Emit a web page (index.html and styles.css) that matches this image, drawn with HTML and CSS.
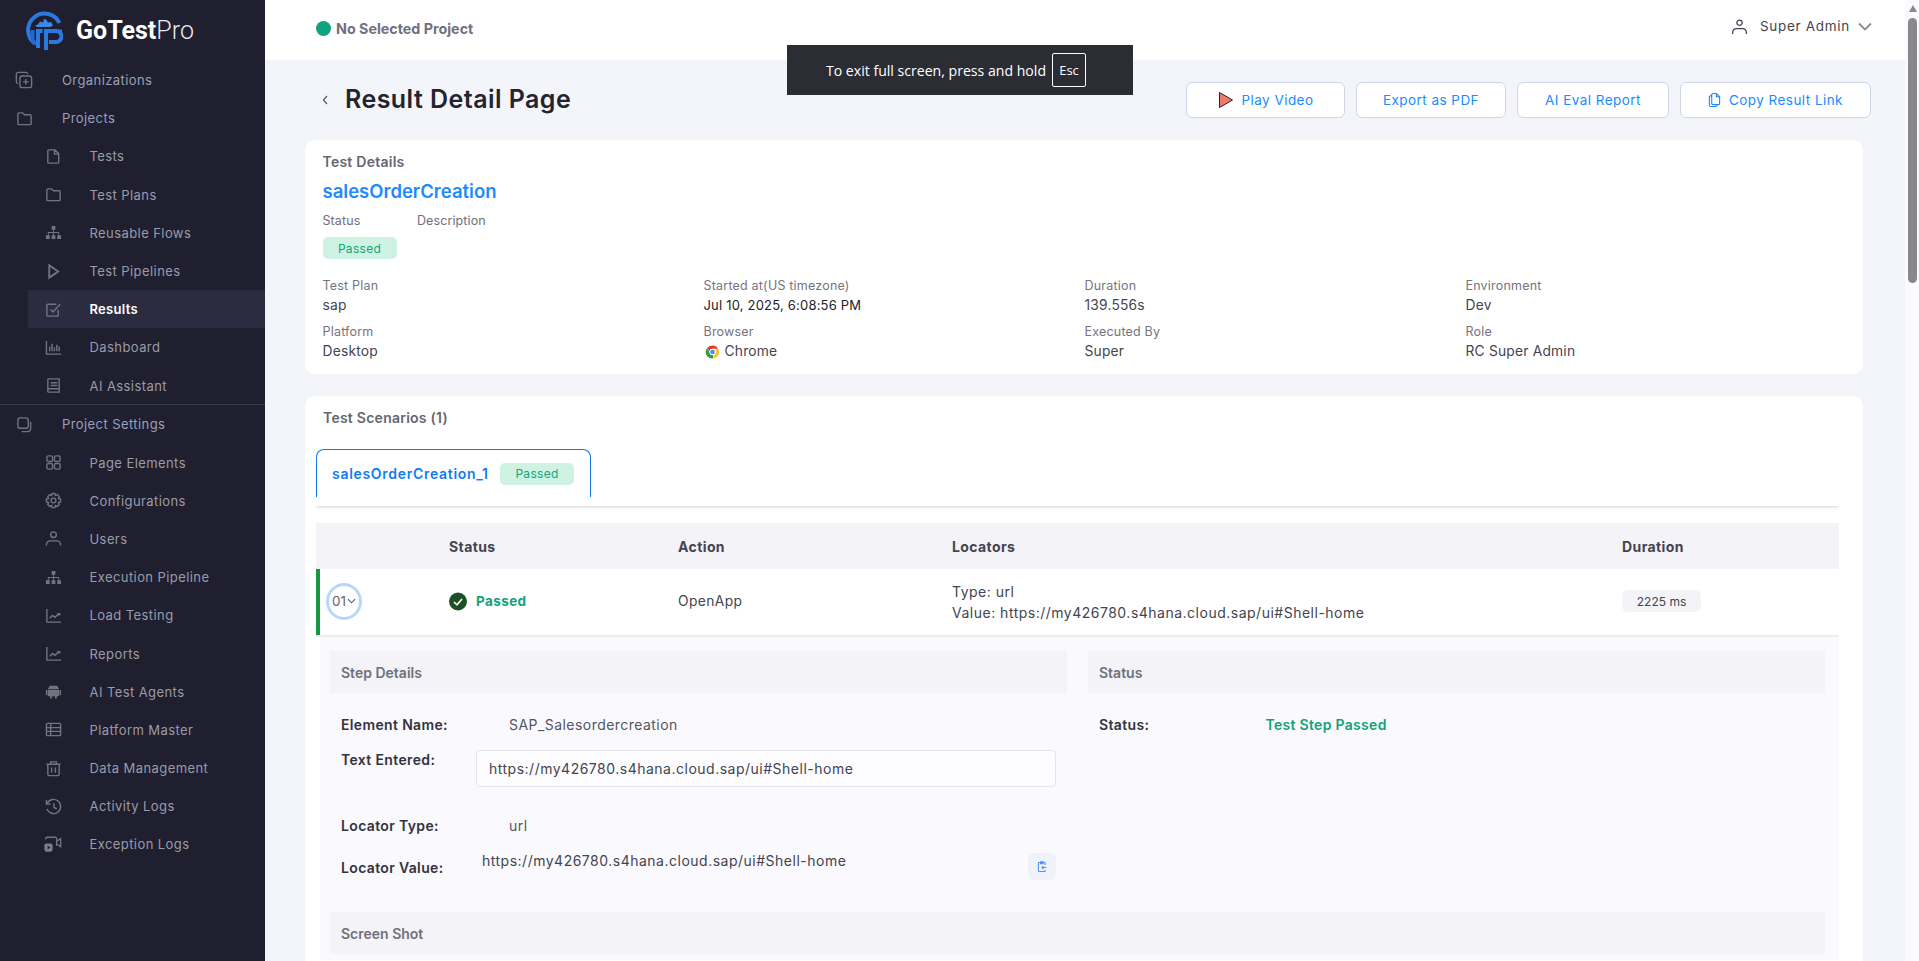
FILE: index.html
```html
<!DOCTYPE html>
<html lang="en">
<head>
<meta charset="utf-8">
<title>Result Detail Page</title>
<link rel="stylesheet" href="styles.css">
</head>
<body>
<aside class="sidebar">
  <div class="brand">
    <svg class="brand-mark" viewBox="0 0 38 40" fill="none">
      <path d="M10 32.500A16.500 16.500 0 1 1 34.500 12" stroke="#2a78e0" stroke-width="4"/>
      <path d="M10 14.500l3-1 2-3 3 1 1-3.500 2 .5 2 3 3-.5 2 3.500-3 1.500H12z" fill="#3b8ae8"/>
      <path d="M7.500 19v8a6 6 0 0 0 5 5.800" stroke="#2468cf" stroke-width="4"/>
      <path d="M17.500 20h-4.500v17M21 39V20h10a5 5 0 0 1 0 11h-7" stroke="#2a78e0" stroke-width="4"/>
      <path d="M33 20h4" stroke="#2a78e0" stroke-width="3"/>
    </svg>
    <span class="brand-name"><b>GoTest</b>Pro</span>
  </div>
  <nav>
    <a class="nav-top"><svg class="ico big" viewBox="0 0 20 20"><rect x="5.500" y="5.500" width="13" height="13" rx="2.500"/><path d="M3.500 14A2 2 0 0 1 1.500 12V3.500A2 2 0 0 1 3.500 1.500H12A2 2 0 0 1 14 3.500M12 9v6M9 12h6"/></svg><span>Organizations</span></a>
    <a class="nav-top"><svg class="ico" viewBox="0 0 18 18"><path d="M2 14.500V4a1 1 0 0 1 1-1h4l2 2h6a1 1 0 0 1 1 1v8.500a1 1 0 0 1-1 1H3a1 1 0 0 1-1-1z"/></svg><span>Projects</span></a>
    <a class="nav-sub"><svg class="ico" viewBox="0 0 18 18"><path d="M4 2h6.500L14.500 6v9a1 1 0 0 1-1 1H4a1 1 0 0 1-1-1V3a1 1 0 0 1 1-1zM10 2v4.500h4.500"/></svg><span>Tests</span></a>
    <a class="nav-sub"><svg class="ico" viewBox="0 0 18 18"><path d="M2 14.500V4a1 1 0 0 1 1-1h4l2 2h6a1 1 0 0 1 1 1v8.500a1 1 0 0 1-1 1H3a1 1 0 0 1-1-1z"/></svg><span>Test Plans</span></a>
    <a class="nav-sub"><svg class="ico solid" viewBox="0 0 18 18"><path d="M7 2h4v4H7zM1 12h4v4H1zM7 12h4v4H7zM13 12h4v4h-4zM8.500 6h1v2.500h5.500v3.500h-1v-2.500H9.500v2.500h-1v-2.500H4v2.500H3V8.500h5.500z"/></svg><span>Reusable Flows</span></a>
    <a class="nav-sub"><svg class="ico thick" viewBox="0 0 18 18"><path d="M4.500 2.500L14 9l-9.500 6.500z"/></svg><span>Test Pipelines</span></a>
    <a class="nav-sub active"><svg class="ico" viewBox="0 0 18 18"><path d="M14 9.500V15a1 1 0 0 1-1 1H3a1 1 0 0 1-1-1V4.500a1 1 0 0 1 1-1h9M6 9l2.500 2.500L16 3.500"/></svg><span>Results</span></a>
    <a class="nav-sub"><svg class="ico" viewBox="0 0 18 18"><path d="M1.500 2v14h15.500M5 13V8M7.500 13V5M10 13V9M12.500 13V6M15 13V8"/></svg><span>Dashboard</span></a>
    <a class="nav-sub"><svg class="ico" viewBox="0 0 18 18"><path d="M4 2h11v14H4a1 1 0 0 1-1-1V3a1 1 0 0 1 1-1zM6 6h7M6 9h7M3 12.500h12"/></svg><span>AI Assistant</span></a>
    <div class="nav-divider"></div>
    <a class="nav-top"><svg class="ico" viewBox="0 0 18 18"><rect x="2" y="2" width="11" height="11" rx="2.500"/><path d="M15.500 6v7.500a3 3 0 0 1-3 3H6"/></svg><span>Project Settings</span></a>
    <a class="nav-sub"><svg class="ico" viewBox="0 0 18 18"><rect x="2" y="2" width="6" height="6" rx="1.500"/><rect x="10" y="2" width="6" height="6" rx="1.500"/><rect x="2" y="10" width="6" height="6" rx="1.500"/><rect x="10" y="10" width="6" height="6" rx="1.500"/></svg><span>Page Elements</span></a>
    <a class="nav-sub"><svg class="ico" viewBox="0 0 18 18"><circle cx="9" cy="9" r="2.500"/><path d="M7.500 1.500h3l.5 2.200 2-1 2.200 2.200-1 2 2.300.6v3l-2.300.6 1 2-2.200 2.200-2-1-.5 2.200h-3l-.5-2.200-2 1-2.200-2.200 1-2-2.300-.6v-3l2.300-.6-1-2L5 2.700l2 1z"/></svg><span>Configurations</span></a>
    <a class="nav-sub"><svg class="ico" viewBox="0 0 18 18"><circle cx="9" cy="5" r="3"/><path d="M1.500 16.500v-1a4 4 0 0 1 4-4h7a4 4 0 0 1 4 4v1"/></svg><span>Users</span></a>
    <a class="nav-sub"><svg class="ico solid" viewBox="0 0 18 18"><path d="M7 2h4v4H7zM1 12h4v4H1zM7 12h4v4H7zM13 12h4v4h-4zM8.500 6h1v2.500h5.500v3.500h-1v-2.500H9.500v2.500h-1v-2.500H4v2.500H3V8.500h5.500z"/></svg><span>Execution Pipeline</span></a>
    <a class="nav-sub"><svg class="ico" viewBox="0 0 18 18"><path d="M2 2v14h15M5 12l3-3 2.500 2L15 7M13 7h2.500v2"/></svg><span>Load Testing</span></a>
    <a class="nav-sub"><svg class="ico" viewBox="0 0 18 18"><path d="M2 2v14h15M5 12l3-3 2.500 2L15 7M13 7h2.500v2"/></svg><span>Reports</span></a>
    <a class="nav-sub"><svg class="ico solid" viewBox="0 0 18 18"><path d="M5 3h8l2 3.500H3zM3 7.500h12V13a1 1 0 0 1-1 1h-1.500v2.500h-2V14h-3v2.500h-2V14H4a1 1 0 0 1-1-1zM1 7.500h1.500V13H1zM15.500 7.500H17V13h-1.500z"/></svg><span>AI Test Agents</span></a>
    <a class="nav-sub"><svg class="ico" viewBox="0 0 18 18"><rect x="1.500" y="2.500" width="15" height="13" rx="1"/><path d="M1.500 7h15M1.500 11h15M6 2.500v13"/></svg><span>Platform Master</span></a>
    <a class="nav-sub"><svg class="ico" viewBox="0 0 18 18"><path d="M1.500 4.500h15M6 4.500V2h6v2.500M3 4.500v10.500a1.500 1.500 0 0 0 1.500 1.500h9a1.500 1.500 0 0 0 1.500-1.500V4.500M7 8v5.500M11 8v5.500"/></svg><span>Data Management</span></a>
    <a class="nav-sub"><svg class="ico" viewBox="0 0 18 18"><path d="M1.500 2v4.500H6M2 6.500A7.500 7.500 0 1 1 2 11.500M9.500 5.500V10l3 1.500"/></svg><span>Activity Logs</span></a>
    <a class="nav-sub"><svg class="ico big-video" viewBox="0 0 20 20"><path d="M2 5V4a1.500 1.500 0 0 1 1.500-1.500h9A1.500 1.500 0 0 1 14 4v8M14 7l4.500-3v9L14 10"/><rect class="fillrect" x="0.500" y="9.500" width="9" height="9" rx="2"/><path class="cut" d="M4 11.800l3 2.200-3 2.200z"/></svg><span>Exception Logs</span></a>
  </nav>
</aside>

<div class="main">
  <header class="topbar">
    <div class="project"><i class="dot"></i><span>No Selected Project</span></div>
    <div class="user">
      <svg class="user-icon" viewBox="0 0 16 16"><circle cx="8" cy="4.500" r="2.500"/><path d="M1.500 15v-1.500a3.500 3.500 0 0 1 3.500-3.500h6a3.500 3.500 0 0 1 3.500 3.500V15"/></svg>
      <span>Super Admin</span>
      <svg class="user-caret" viewBox="0 0 14 9"><path d="M1 1.500l6 6 6-6"/></svg>
    </div>
  </header>

  <section class="content">
    <div class="page-head">
      <svg class="back" viewBox="0 0 8 12"><path d="M6 2L2.500 6 6 10"/></svg>
      <h1>Result Detail Page</h1>
      <div class="actions">
        <button class="btn w-play"><svg class="play" viewBox="0 0 16 18"><path d="M1.500 1.500L14.500 9 1.500 16.500z"/></svg>Play Video</button>
        <button class="btn w-pdf">Export as PDF</button>
        <button class="btn w-eval">AI Eval Report</button>
        <button class="btn w-copy"><svg class="copy" viewBox="0 0 14 16"><path d="M5 1h4l3.500 3.500V12a1 1 0 0 1-1 1H5a1 1 0 0 1-1-1V2a1 1 0 0 1 1-1zM4 3.500H2.500a1 1 0 0 0-1 1V14a1 1 0 0 0 1 1h6a1 1 0 0 0 1-1v-1M9 1v3.500h3.500"/></svg>Copy Result Link</button>
      </div>
    </div>

    <article class="card details">
      <h2>Test Details</h2>
      <div class="test-name">salesOrderCreation</div>
      <div class="meta-heads"><span>Status</span><span>Description</span></div>
      <span class="badge">Passed</span>
      <div class="facts">
        <div><label>Test Plan</label><p>sap</p></div>
        <div><label>Started at(US timezone)</label><p class="dark">Jul 10, 2025, 6:08:56 PM</p></div>
        <div><label>Duration</label><p>139.556s</p></div>
        <div><label>Environment</label><p>Dev</p></div>
        <div><label>Platform</label><p>Desktop</p></div>
        <div><label>Browser</label><p class="browser">
          <svg viewBox="0 0 32 32"><path d="M16 2a14 14 0 0 1 12.100 7H16a7 7 0 0 0-6.600 4.700L4.500 7.400A14 14 0 0 1 16 2z" fill="#e33b2e"/><path d="M28.100 9A14 14 0 0 1 16.500 30l5.600-10a7 7 0 0 0 .1-8V9z" fill="#fbc02d"/><path d="M4.500 7.400L10 17a7 7 0 0 0 8 5.800L16.500 30A14 14 0 0 1 4.500 7.400z" fill="#2e9e48"/><circle cx="16" cy="16" r="6.500" fill="#fff"/><circle cx="16" cy="16" r="5" fill="#4a8cf0"/></svg>Chrome</p></div>
        <div><label>Executed By</label><p>Super</p></div>
        <div><label>Role</label><p>RC Super Admin</p></div>
      </div>
    </article>

    <article class="card scenarios">
      <h2>Test Scenarios (1)</h2>
      <div class="tabstrip">
        <div class="tab"><span class="tab-name">salesOrderCreation_1</span><span class="badge">Passed</span></div>
      </div>
      <div class="thead"><span></span><span>Status</span><span>Action</span><span>Locators</span><span>Duration</span></div>
      <div class="trow">
        <div><div class="step-no">01<svg viewBox="0 0 10 6"><path d="M1 1l4 4 4-4"/></svg></div></div>
        <div class="step-status"><svg viewBox="0 0 18 18"><circle cx="9" cy="9" r="9"/><path d="M5 9.500l3 2.800L13 6.500"/></svg><span>Passed</span></div>
        <div class="step-action">OpenApp</div>
        <div class="step-loc"><div>Type: url</div><div>Value: https://my426780.s4hana.cloud.sap/ui#Shell-home</div></div>
        <div><span class="pill">2225 ms</span></div>
      </div>
      <div class="panel">
        <div class="panel-cols">
          <div>
            <div class="panel-head">Step Details</div>
            <div class="kv first"><strong>Element Name:</strong><span>SAP_Salesordercreation</span></div>
            <div class="kv-entered"><strong>Text Entered:</strong><div class="field">https://my426780.s4hana.cloud.sap/ui#Shell-home</div></div>
            <div class="kv type"><strong>Locator Type:</strong><span>url</span></div>
            <div class="kv-locator"><strong>Locator Value:</strong><span>https://my426780.s4hana.cloud.sap/ui#Shell-home</span>
              <button class="copy-btn"><svg viewBox="0 0 14 16"><path d="M11.500 6V3.500a1 1 0 0 0-1-1H3a1 1 0 0 0-1 1V14a1 1 0 0 0 1 1h7.500a1 1 0 0 0 1-1v-1.500M5 1.500h3.500V4H5zM13 9.500H7M9 7.500l-2 2 2 2"/></svg></button>
            </div>
          </div>
          <div>
            <div class="panel-head">Status</div>
            <div class="kv first"><strong>Status:</strong><span class="ok">Test Step Passed</span></div>
          </div>
        </div>
        <div class="panel-head shot">Screen Shot</div>
      </div>
    </article>
  </section>
</div>

<div class="scrollbar"><i class="sb-arrow"></i><i class="sb-thumb"></i></div>

<div class="fs-toast">To exit full screen, press and hold<kbd>Esc</kbd></div>
</body>
</html>
```

FILE: styles.css
```css
* { box-sizing: border-box; }
html, body { height: 100%; }
body {
  margin: 0;
  display: flex;
  height: 961px;
  overflow: hidden;
  background: #f3f5fb;
  font-family: Inter, "Noto Sans", "Liberation Sans", sans-serif;
  font-size: 13px;
  color: #33333d;
}

/* sidebar */
.sidebar { width: 265px; flex: none; background: #1f1f30; color: #9b9ba8; }
.brand { height: 61px; display: flex; align-items: center; padding-left: 25px; }
.brand-mark { width: 38px; height: 40px; margin-right: 13px; }
.brand-name { font-family: Roboto, sans-serif; font-weight: 300; font-size: 25px; color: #e8e8ee; }
.brand-name b { font-weight: 700; color: #fff; }
nav a { display: flex; align-items: center; height: 38.2px; font-size: 13px; letter-spacing: .42px; }
.nav-top { padding-left: 15.500px; color: #9a9fb8; }
.nav-top .ico { margin-right: 29.500px; }
.nav-sub { margin-left: 28px; padding-left: 16.500px; }
.nav-sub .ico { margin-right: 28px; }
.nav-sub.active { background: #2c2c40; color: #fff; font-weight: 600; letter-spacing: .3px; }
.nav-divider { height: 1px; margin-top: -.4px; background: #3b3b4e; }
.ico { width: 17px; height: 17px; flex: none; fill: none; stroke: #73737f; stroke-width: 1.500; }
.nav-top .ico.big { width: 18px; height: 18px; margin-left: -.5px; margin-right: 29px; }
.ico.solid { fill: #73737f; stroke: none; }
.ico.thick { stroke-width: 2; }
.nav-sub .ico.big-video { width: 18px; height: 18px; margin-left: -1px; margin-right: 28px; }
.ico .fillrect { fill: #7d7d8c; stroke: none; }
.ico .cut { fill: #1f1f30; stroke: none; }

/* main */
.main { flex: 1; min-width: 0; display: flex; flex-direction: column; }
.topbar { height: 60px; flex: none; background: #fff; display: flex; align-items: center; justify-content: space-between; padding: 0 33px 4px 51px; }
.project { display: flex; align-items: center; gap: 5px; font-size: 14.300px; font-weight: 700; color: #70707c; }
.dot { width: 15px; height: 15px; border-radius: 50%; background: #10a37f; }
.user { display: flex; align-items: center; margin-bottom: 4px; font-size: 13.500px; color: #44444f; letter-spacing: .7px; }
.user-icon { width: 17px; height: 17px; margin-right: 12px; fill: none; stroke: #44444f; stroke-width: 1.200; }
.user-caret { width: 14px; height: 9px; margin-left: 8px; fill: none; stroke: #8b8b96; stroke-width: 1.800; }

.content { flex: 1; min-height: 0; padding: 22px 41px 0 40px; }
.page-head { display: flex; align-items: center; height: 36px; margin-bottom: 22px; }
.back { width: 8px; height: 12px; margin: 0 16px 0 16px; fill: none; stroke: #55606f; stroke-width: 1.300; }
h1 { margin: 0 0 3px; font-size: 25px; font-weight: 600; color: #24242e; letter-spacing: .45px; }
.actions { margin-left: auto; display: flex; gap: 11px; margin-right: -7px; }
.btn {
  height: 36px; display: flex; align-items: center; justify-content: center; gap: 8px;
  background: #fff; border: 1px solid #cdd5e6; border-radius: 6px;
  font: inherit; font-size: 13.500px; letter-spacing: .45px; color: #1a8cff;
}
.w-play { width: 159px; }
.w-pdf { width: 150px; }
.w-eval { width: 152px; }
.w-copy { width: 191px; }
.play { width: 16px; height: 18px; fill: #f4776c; stroke: #2b2222; stroke-width: 1; }
.copy { width: 13px; height: 16px; fill: none; stroke: #1a8cff; stroke-width: 1.200; }

/* cards */
.card { background: #fff; border-radius: 10px; margin-right: 1px; }
.card h2 { margin: 0; font-size: 14px; line-height: 18px; font-weight: 600; letter-spacing: .25px; color: #666670; }
.details { height: 234px; padding: 13px 18px 0 17.500px; margin-bottom: 22px; }
.test-name { margin-top: 8px; font-size: 18.500px; line-height: 24px; font-weight: 600; color: #1a8cff; }
.meta-heads { margin-top: 9px; margin-bottom: 7px; display: flex; font-size: 12.500px; line-height: 18px; letter-spacing: .1px; color: #70707c; }
.meta-heads span:first-child { width: 94.500px; }
.badge {
  display: inline-flex; align-items: center; justify-content: center;
  width: 74px; height: 22px; border-radius: 5px;
  background: #cff3e3; color: #13a57c; font-size: 12px; letter-spacing: .3px;
}
.facts { margin-top: 18px; display: grid; grid-template-columns: repeat(4, 381px); row-gap: 9px; }
.facts label { display: block; font-size: 12.500px; line-height: 18px; letter-spacing: .2px; color: #74747f; }
.facts p { margin: 1px 0 -1px; font-size: 13.800px; line-height: 19px; letter-spacing: .2px; color: #44444f; }
.facts p.dark { font-size: 13px; letter-spacing: .2px; color: #22222c; }
.browser { display: flex; align-items: center; gap: 5px; }
.browser svg { width: 15px; height: 16px; margin-left: 1px; }

.scenarios { height: 565px; border-radius: 10px 10px 0 0; padding: 13px 24px 0 11px; }
.scenarios h2 { padding-left: 7px; }
.tabstrip { margin-top: 22px; height: 58px; border-bottom: 1px solid #e3e3e8; box-shadow: 0 2px 2px -1px rgba(0,0,0,.1); }
.tab {
  width: 275px; height: 48px; display: flex; align-items: center; justify-content: space-between;
  padding: 0 16px 0 15px; border: 1px solid #1577ea; border-bottom: 0; border-radius: 8px 8px 0 0;
}
.tab-name { font-size: 14px; font-weight: 600; letter-spacing: .7px; color: #0f7df0; }
.thead, .trow { display: grid; grid-template-columns: 133px 229px 274px 670px 1fr; align-items: center; }
.thead { margin-top: 16px; height: 46px; background: #f3f3f8; font-size: 14px; font-weight: 700; letter-spacing: .4px; color: #44444f; }
.trow { height: 68px; background: #fff; box-shadow: inset 4px 0 0 #16963e; border-bottom: 2px solid #ececf1; }
.trow > div:first-child { padding-left: 10px; }
.step-no {
  width: 36px; height: 37px; border: 3px solid #b6d7fb; border-radius: 50%;
  display: flex; align-items: center; justify-content: center; gap: 1px;
  font-size: 13.500px; color: #666670; margin-top: -2px;
}
.step-no svg { width: 9px; height: 6px; fill: none; stroke: #55555f; stroke-width: 1.200; }
.step-status { display: flex; align-items: center; gap: 9px; font-size: 13.500px; font-weight: 700; color: #12a27a; letter-spacing: .4px; margin-top: -2px; }
.step-status svg { width: 18px; height: 19px; }
.step-status circle { fill: #1d5125; }
.step-status path { fill: none; stroke: #fff; stroke-width: 1.600; }
.step-action { font-size: 13.800px; color: #44444f; letter-spacing: .4px; margin-top: -2px; }
.step-loc { font-size: 14px; line-height: 21px; color: #44444f; letter-spacing: .5px; margin-top: -1px; }
.pill { display: inline-flex; align-items: center; justify-content: center; width: 79px; height: 22px; border-radius: 6px; background: #f3f4f8; font-size: 12px; color: #44444f; margin-top: -2px; }

.panel { margin-left: 4px; background: #f9f9fe; padding: 14px 14px 0 10px; height: 323px; }
.panel-cols { display: grid; grid-template-columns: 737px 737px; column-gap: 21px; height: 261px; }
.panel-head { height: 42px; display: flex; align-items: center; padding-left: 11px; background: #f3f3f8; font-size: 14px; font-weight: 600; color: #70707c; }
.panel-head.shot { width: 1495px; }
.panel strong { font-size: 14px; font-weight: 600; letter-spacing: .35px; color: #33333d; }
.kv { display: flex; align-items: center; padding-left: 11px; font-size: 14px; color: #55555f; letter-spacing: .45px; }
.kv strong { width: 168px; flex: none; }
.kv.first { margin-top: 21px; height: 20px; }
.kv .ok { margin-left: -1.500px; letter-spacing: .3px; }
.kv-entered { display: flex; padding-left: 11px; margin-top: 16px; color: #44444f; }
.kv-entered strong { width: 135px; flex: none; line-height: 19px; }
.field {
  width: 580px; height: 37px; padding-left: 12px; display: flex; align-items: center;
  border: 1px solid #e4e4ea; border-radius: 4px; background: #fcfcff; font-size: 14px; letter-spacing: .5px;
}
.kv.type { margin-top: 28px; height: 20px; }
.kv-locator { display: flex; align-items: center; height: 27px; margin-top: 18px; padding-left: 11px; font-size: 14px; color: #44444f; letter-spacing: .5px; }
.kv-locator strong { width: 141px; flex: none; margin-top: 1px; }
.kv-locator span { margin-top: -13px; }
.copy-btn {
  margin-left: auto; margin-right: 11px; width: 28px; height: 27px; padding: 0; display: flex; align-items: center; justify-content: center;
  border: 0; border-radius: 6px; background: #f1f2f9;
}
.copy-btn svg { width: 10px; height: 13px; fill: none; stroke: #4d94f5; stroke-width: 1.500; }
.ok { color: #12a27a; font-weight: 600; }

/* scrollbar */
.scrollbar { width: 14px; flex: none; background: #fbfbfd; display: flex; flex-direction: column; align-items: center; padding: 5px 0 0 1px; }
.sb-arrow { width: 0; height: 0; border-left: 4.500px solid transparent; border-right: 4.500px solid transparent; border-bottom: 7px solid #8a888c; }
.sb-thumb { width: 9px; height: 265px; margin-top: 6px; border-radius: 5px; background: #8a888c; }

/* browser fullscreen notice */
.fs-toast {
  position: absolute; left: 787px; top: 45px; width: 346px; height: 50px;
  display: flex; align-items: center; justify-content: center; gap: 6px; padding-right: 8px;
  background: #2b2c34; color: #fff; font-family: "Open Sans", sans-serif; font-size: 14.100px;
}
.fs-toast kbd { width: 34px; height: 34px; display: flex; align-items: center; justify-content: center; border: 1px solid #fff; border-radius: 2px; font: inherit; font-size: 13px; }
```
